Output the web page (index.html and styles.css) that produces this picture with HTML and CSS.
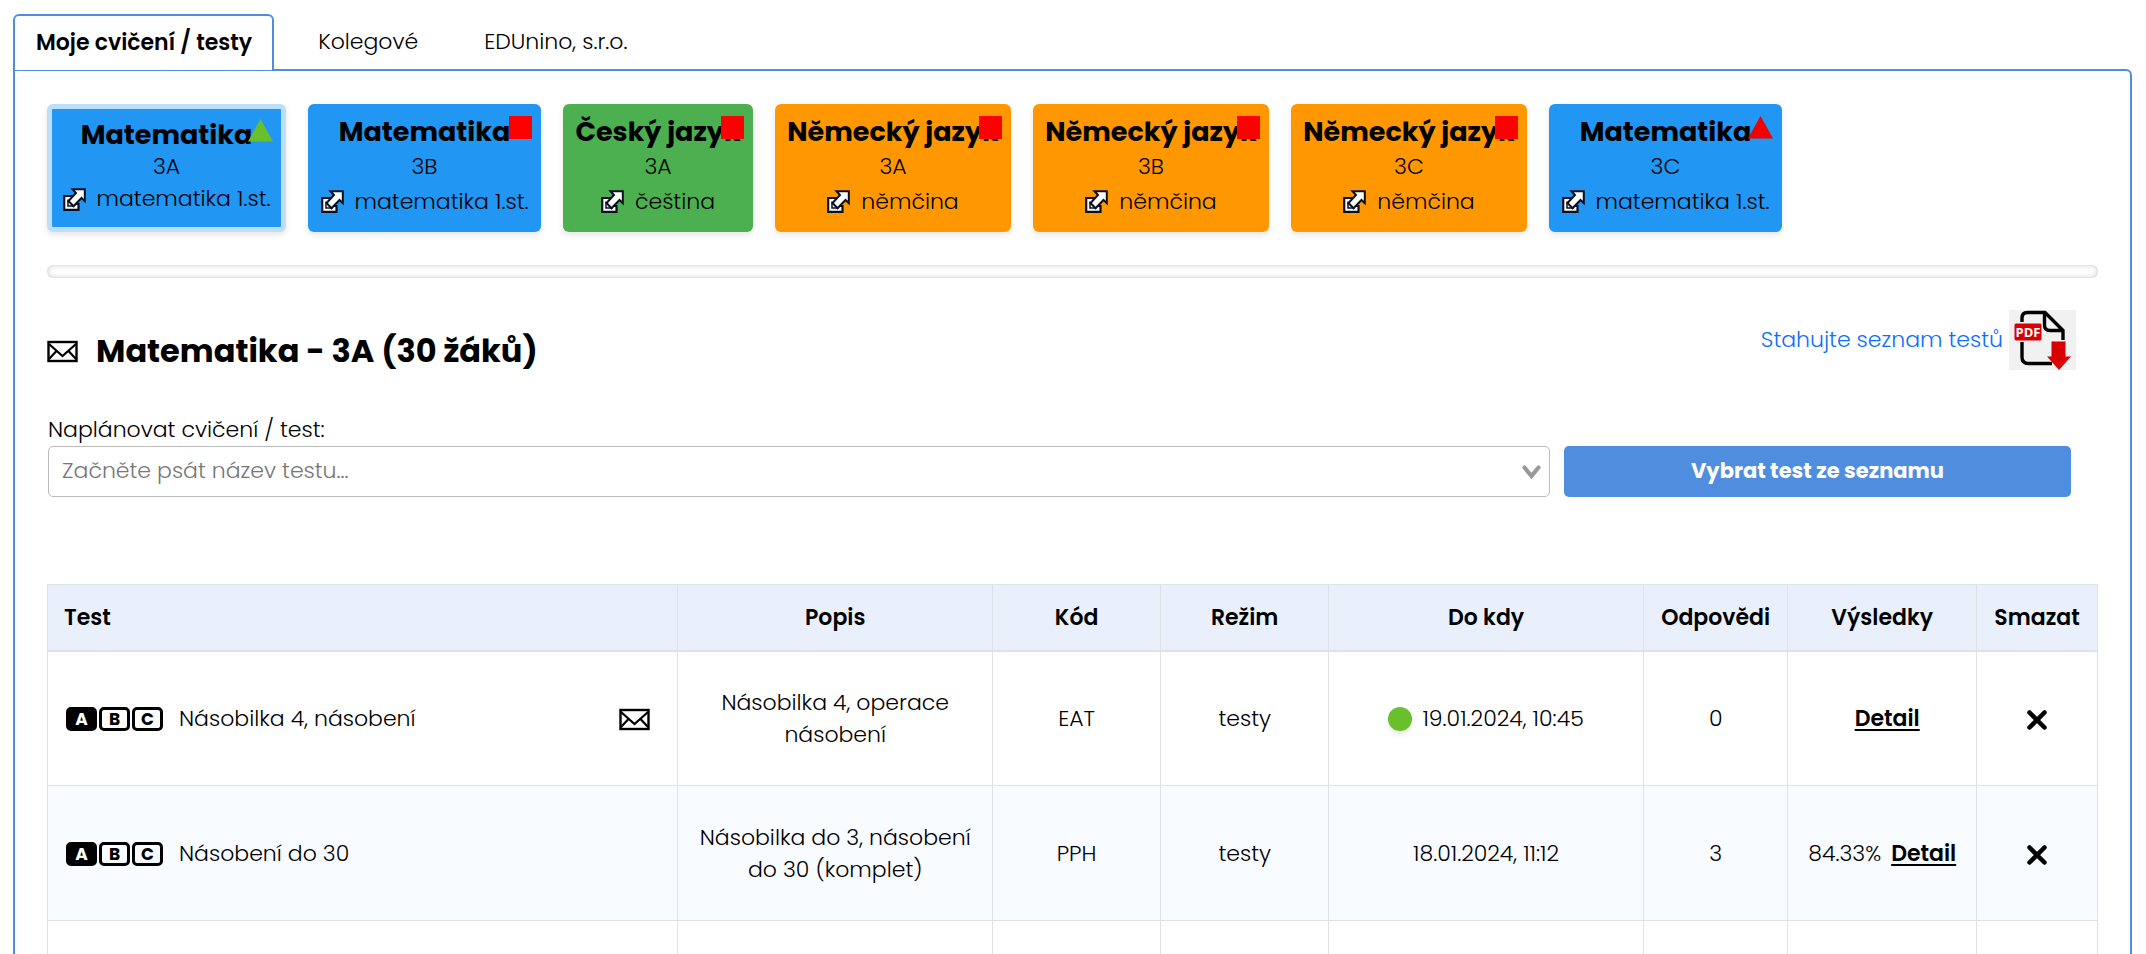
FILE: index.html
```html
<!DOCTYPE html>
<html lang="cs">
<head>
<meta charset="utf-8">
<meta name="viewport" content="width=device-width, initial-scale=1">
<title>Moje cvičení / testy</title>
<link rel="stylesheet" href="styles.css">
</head>
<body>
<svg class="defs" aria-hidden="true">
  <symbol id="mail" viewBox="0 0 31 22">
    <rect x="1.5" y="1.5" width="28" height="19" fill="#fff" stroke="#000" stroke-width="2.4"/>
    <path d="M2 3.500 15.500 15.500 29 3.500M2 18.500 9.500 10.500M29 18.500 21.500 10.500" fill="none" stroke="#000" stroke-width="2.2"/>
  </symbol>
  <symbol id="open" viewBox="0 0 23 23">
    <path d="M1.200 8H9V13L12 16H15.500V21.800H1.200Z" fill="#fff" stroke="#0b1020" stroke-width="2.200"/>
    <path d="M9.500 1.200H21.800V13.200L18.500 10 10.500 18.200 5.500 13 13 5Z" fill="#fff" stroke="#0b1020" stroke-width="2"/>
    <path d="M5 11.500V18H11.500" fill="none" stroke="#0b1020" stroke-width="1.500"/>
  </symbol>
  <symbol id="cross" viewBox="0 0 22 22">
    <path d="M3.500 3.500 18.500 18.500M18.500 3.500 3.500 18.500" fill="none" stroke="#000" stroke-width="4.500" stroke-linecap="round"/>
  </symbol>
</svg>
<div class="page">
  <nav class="tabs">
    <a class="tab tab-active" href="#moje">Moje cvičení / testy</a>
    <a class="tab" href="#kolegove">Kolegové</a>
    <a class="tab" href="#edunino">EDUnino, s.r.o.</a>
  </nav>
  <main class="panel">
    <section class="cards">
      <a class="card card-blue card-selected" href="#m3a"><strong class="card-title">Matematika</strong><span>3A</span><span class="card-link"><svg class="open"><use href="#open"/></svg>matematika 1.st.</span><svg class="mark" viewBox="0 0 25 23"><path d="M12.500 0 25 22.500H0Z" fill="#6ac02c"/></svg></a>
      <a class="card card-blue" href="#m3b"><strong class="card-title">Matematika</strong><span>3B</span><span class="card-link"><svg class="open"><use href="#open"/></svg>matematika 1.st.</span><i class="mark square"></i></a>
      <a class="card card-green" href="#c3a"><strong class="card-title">Český jazyk</strong><span>3A</span><span class="card-link"><svg class="open"><use href="#open"/></svg>čeština</span><i class="mark square"></i></a>
      <a class="card card-orange" href="#n3a"><strong class="card-title">Německý jazyk</strong><span>3A</span><span class="card-link"><svg class="open"><use href="#open"/></svg>němčina</span><i class="mark square"></i></a>
      <a class="card card-orange" href="#n3b"><strong class="card-title">Německý jazyk</strong><span>3B</span><span class="card-link"><svg class="open"><use href="#open"/></svg>němčina</span><i class="mark square"></i></a>
      <a class="card card-orange" href="#n3c"><strong class="card-title">Německý jazyk</strong><span>3C</span><span class="card-link"><svg class="open"><use href="#open"/></svg>němčina</span><i class="mark square"></i></a>
      <a class="card card-blue" href="#m3c"><strong class="card-title">Matematika</strong><span>3C</span><span class="card-link"><svg class="open"><use href="#open"/></svg>matematika 1.st.</span><svg class="mark" viewBox="0 0 25 23"><path d="M12.500 0 25 22.500H0Z" fill="#f00000"/></svg></a>
    </section>
    <hr class="divider">
    <header class="class-head">
      <h1 class="class-title"><svg class="mail"><use href="#mail"/></svg>Matematika - 3A (30 žáků)</h1>
      <a class="download" href="#pdf">Stahujte seznam testů
        <svg class="pdf" viewBox="0 0 67 60">
          <rect width="67" height="60" fill="#f1f1f1"/>
          <path d="M13 12V8Q13 2.500 18.500 2.500H36L54 20.500V30M13 32V47Q13 53.500 19.500 53.500H43M35.500 3V15Q35.500 20.500 41 20.500H54" fill="none" stroke="#000" stroke-width="3.400"/>
          <rect x="5" y="13" width="28" height="18" rx="2" fill="#d80000" stroke="#f1f1f1"/>
          <text class="pdf-text" x="19" y="26.500" text-anchor="middle">PDF</text>
          <path d="M42.500 31.500H56.500V46.500H62L50 60 38 46.500H42.500Z" fill="#d80000"/>
        </svg>
      </a>
    </header>
    <section class="planner">
      <label class="planner-label" for="test-name">Naplánovat cvičení / test:</label>
      <div class="combo">
        <input class="combo-input" id="test-name" type="text" placeholder="Začněte psát název testu...">
        <svg class="chevron" viewBox="0 0 19 14"><path d="M2.500 2.500 9.500 11 16.500 2.500" fill="none" stroke="#999" stroke-width="4.200" stroke-linecap="round"/></svg>
      </div>
      <button class="pick" type="button">Vybrat test ze seznamu</button>
    </section>
    <table class="tests">
      <colgroup><col class="c-test"><col class="c-wide"><col class="c-mid"><col class="c-mid"><col class="c-wide"><col class="c-ans"><col class="c-res"><col></colgroup>
      <thead>
        <tr><th>Test</th><th>Popis</th><th>Kód</th><th>Režim</th><th>Do kdy</th><th>Odpovědi</th><th>Výsledky</th><th>Smazat</th></tr>
      </thead>
      <tbody>
        <tr>
          <td><div class="test"><span class="variants"><b class="variant variant-on">A</b><b class="variant">B</b><b class="variant">C</b></span>Násobilka 4, násobení<svg class="mail mail-end"><use href="#mail"/></svg></div></td>
          <td>Násobilka 4, operace násobení</td><td>EAT</td><td>testy</td>
          <td><div class="due"><i class="dot"></i>19.01.2024, 10:45</div></td><td>0</td>
          <td><div class="result"><span></span><a class="detail" href="#d1">Detail</a></div></td>
          <td><button class="remove" type="button" aria-label="Smazat"><svg class="cross"><use href="#cross"/></svg></button></td>
        </tr>
        <tr>
          <td><div class="test"><span class="variants"><b class="variant variant-on">A</b><b class="variant">B</b><b class="variant">C</b></span>Násobení do 30</div></td>
          <td>Násobilka do 3, násobení do 30 (komplet)</td><td>PPH</td><td>testy</td>
          <td>18.01.2024, 11:12</td><td>3</td>
          <td><div class="result"><span>84.33%</span><a class="detail" href="#d2">Detail</a></div></td>
          <td><button class="remove" type="button" aria-label="Smazat"><svg class="cross"><use href="#cross"/></svg></button></td>
        </tr>
        <tr><td></td><td></td><td></td><td></td><td></td><td></td><td></td><td></td></tr>
      </tbody>
    </table>
  </main>
</div>
</body>
</html>
```
FILE: styles.css
```css
* { box-sizing: border-box; }
body {
  margin: 0;
  font-family: Poppins, Inter, "Open Sans", sans-serif;
  font-size: 22px;
  font-weight: 300;
  line-height: 32px;
  color: #000;
  background: #fff;
}
a { color: inherit; text-decoration: none; }
svg { display: block; flex: none; }
.defs { position: absolute; width: 0; height: 0; }
.page { height: 100vh; overflow: hidden; padding: 14px 14px 0 13px; }

.tabs { display: flex; position: relative; height: 57px; margin-bottom: -2px; }
.tab { padding: 12px 22px; margin-right: 22px; }
.tab-active {
  padding: 11px 20px 11px 21px;
  font-weight: 600;
  background: #fff;
  border: 2px solid #4f8ddf;
  border-bottom-width: 1px;
  border-radius: 6px 6px 0 0;
}
.panel {
  min-height: 1100px;
  padding: 33px 32px;
  border: 2px solid #4f8ddf;
  border-radius: 0 6px 0 0;
}

.cards { display: flex; gap: 22px; }
.card {
  position: relative;
  display: flex;
  flex-direction: column;
  align-items: center;
  height: 128px;
  width: 236px;
  padding: 10px 0 0;
  line-height: 35px;
  white-space: nowrap;
  border-radius: 6px;
  box-shadow: 0 3px 6px rgba(0, 0, 0, .1);
}
.card-blue { width: 233px; background: #2196f3; }
.card-green { width: 190px; background: #4caf50; }
.card-orange { background: #ff9800; }
.card-selected {
  width: 239px;
  line-height: 32px;
  border: 5px solid #bbdefb;
}
.card-title { font-size: 27px; font-weight: 700; }
.card-link { display: flex; align-items: center; gap: 11px; }
.open { width: 23px; height: 23px; }
.mark { position: absolute; top: 12px; right: 9px; width: 25px; height: 23px; }
.square { width: 23px; background: #f00; }
.card-selected .mark { top: 10px; right: 8px; }

.divider {
  height: 13px;
  margin: 33px 0 32px;
  border: 0;
  border-radius: 6px;
  background: #fdfdfd;
  box-shadow: inset 0 0 5px rgba(0, 0, 0, .22);
}

.class-head { display: flex; justify-content: space-between; height: 104px; padding-right: 22px; }
.class-title {
  display: flex;
  align-items: center;
  gap: 18px;
  height: 82px;
  margin: 0;
  font-size: 32px;
  font-weight: 700;
}
.mail { width: 31px; height: 23px; }
.download { display: flex; align-items: center; gap: 6px; height: 60px; color: #0d6efd; }
.pdf { width: 67px; height: 60px; }
.pdf-text { font-family: "Open Sans", sans-serif; font-size: 13px; font-weight: 700; fill: #fff; }

.planner {
  display: grid;
  grid-template-columns: 1502fr 507fr;
  column-gap: 14px;
  padding: 0 27px 0 1px;
}
.planner-label { grid-column: 1 / -1; }
.combo { position: relative; }
.combo-input {
  display: block;
  width: 100%;
  height: 51px;
  padding: 0 48px 2px 13px;
  font: inherit;
  border: 1px solid #bbb;
  border-radius: 5px;
}
.combo-input::placeholder { color: #777; }
.chevron { position: absolute; right: 9px; top: 19px; width: 19px; height: 14px; }
.pick {
  height: 51px;
  padding: 0 12px 2px;
  font: inherit;
  font-size: 21px;
  font-weight: 700;
  color: #fff;
  background: #4f8ddf;
  border: 0;
  border-radius: 5px;
}

.tests {
  width: 100%;
  margin-top: 87px;
  table-layout: fixed;
  border-collapse: collapse;
  text-align: center;
}
.c-test { width: 30.75%; }
.c-wide { width: 15.35%; }
.c-mid { width: 8.2%; }
.c-ans { width: 7.05%; }
.c-res { width: 9.2%; }
.tests th, .tests td { padding: 2px 16px 0; border: 1px solid #dee2e6; }
.tests th { height: 66px; padding: 2px 0 0; font-weight: 600; background: #eaf0fb; border-bottom-width: 2px; }
.tests th:first-child { padding-left: 16px; text-align: left; }
.tests td { height: 135px; }
.tests tbody tr:nth-child(even) { background: #f8fbff; }
.test { display: flex; align-items: center; }
.variants { display: flex; gap: 2px; margin: 0 16px 0 2px; }
.variant {
  width: 31px;
  height: 24px;
  font-size: 17px;
  font-weight: 700;
  line-height: 19px;
  text-align: center;
  border: 3px solid #000;
  border-radius: 5px;
}
.variant-on { color: #fff; background: #000; }
.mail-end { margin-left: auto; margin-right: 11px; }
.due { display: flex; align-items: center; justify-content: center; gap: 10px; }
.dot { width: 24px; height: 24px; border-radius: 50%; background: #6ac02c; box-shadow: 0 3px 6px rgba(0, 0, 0, .1); }
.result { display: flex; justify-content: center; gap: 10px; margin: 0 -10px; }
.detail { font-weight: 600; text-decoration: underline; text-decoration-thickness: 2px; text-underline-offset: 3px; }
.remove { padding: 0; border: 0; background: none; vertical-align: middle; }
.cross { width: 22px; height: 22px; }
```
